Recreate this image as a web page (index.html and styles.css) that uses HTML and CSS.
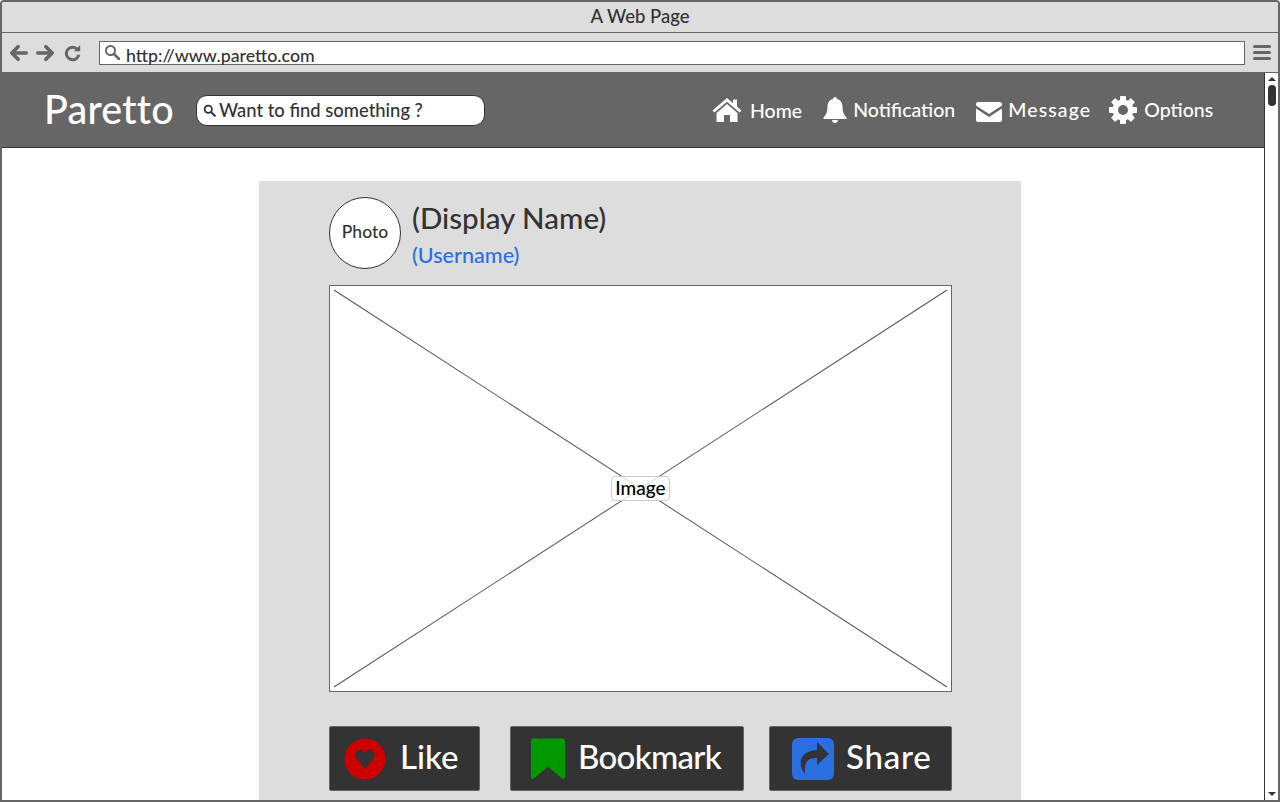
FILE: index.html
```html
<!DOCTYPE html>
<html>
<head>
    <title>A Web Page</title>
    <link rel="stylesheet" href="styles.css">
</head>
<body>
    <div class="window">
        <div class="titlebar">A Web Page</div>
        <div class="toolbar">
            <svg class="tool-icon" viewBox="0 0 20 20"><path d="M9 3 L2 10 L9 17 M3 10 H18" fill="none" stroke="#666" stroke-width="4" stroke-linecap="round" stroke-linejoin="round"/></svg>
            <svg class="tool-icon" viewBox="0 0 20 20"><path d="M11 3 L18 10 L11 17 M17 10 H2" fill="none" stroke="#666" stroke-width="4" stroke-linecap="round" stroke-linejoin="round"/></svg>
            <svg class="tool-icon reload" viewBox="0 0 20 20"><path d="M15 6 A7 7 0 1 0 16.5 12" fill="none" stroke="#666" stroke-width="3.4"/><path d="M11 8 H18 V1 Z" fill="#666"/></svg>
            <div class="address">
                <svg class="addr-icon" viewBox="0 0 16 16"><circle cx="6.5" cy="6.5" r="4.5" fill="none" stroke="#666" stroke-width="2"/><path d="M10 10 L15 15" stroke="#666" stroke-width="2.6" stroke-linecap="round"/></svg>
                <span>http://www.paretto.com</span>
            </div>
            <div class="burger"><i></i><i></i><i></i></div>
        </div>
        <div class="viewport">
            <div class="page">
                <nav class="navbar">
                    <div class="brand">Paretto</div>
                    <div class="search">
                        <svg class="search-icon" viewBox="0 0 16 16"><circle cx="6.5" cy="6.5" r="4.5" fill="none" stroke="#333" stroke-width="2.2"/><path d="M10 10 L14.5 14.5" stroke="#333" stroke-width="2.6" stroke-linecap="round"/></svg>
                        <span>Want to find something ?</span>
                    </div>
                    <div class="nav-links">
                        <a class="nav-link home">
                            <svg class="nav-icon home-icon" viewBox="0 0 30 26"><path d="M15 1 L21 6.2 V2.5 H25 V9.7 L29.5 13.6 L27.6 15.6 L15 4.8 L2.4 15.6 L.5 13.6 Z M15 7 L25.5 16 V25 H18 V18 H12 V25 H4.5 V16 Z" fill="#fff"/></svg>
                            <span>Home</span>
                        </a>
                        <a class="nav-link bell">
                            <svg class="nav-icon bell-icon" viewBox="0 0 24 26"><path d="M12 0 C13.5 0 14 1 14 2 C18 3 19.5 6 19.5 10 C19.5 15 21 18 23.5 20.5 V22 H.5 V20.5 C3 18 4.5 15 4.5 10 C4.5 6 6 3 10 2 C10 1 10.5 0 12 0 Z M9 23 H15 C15 25 13.5 26 12 26 C10.5 26 9 25 9 23 Z" fill="#fff"/></svg>
                            <span class="raised">Notification</span>
                        </a>
                        <a class="nav-link mail">
                            <svg class="nav-icon mail-icon" viewBox="0 0 26 20"><path d="M2 0 H24 C25 0 26 1 26 2 V3.5 L13 12 L0 3.5 V2 C0 1 1 0 2 0 Z M0 6.5 L13 15 L26 6.5 V18 C26 19 25 20 24 20 H2 C1 20 0 19 0 18 Z" fill="#fff"/></svg>
                            <span class="raised wide">Message</span>
                        </a>
                        <a class="nav-link gear">
                            <svg class="nav-icon gear-icon" viewBox="0 0 28 28">
                                <g fill="#fff">
                                    <circle cx="14" cy="14" r="10.5"/>
                                    <rect x="11" y="0" width="6" height="28" rx="1"/>
                                    <rect x="11" y="0" width="6" height="28" rx="1" transform="rotate(45 14 14)"/>
                                    <rect x="11" y="0" width="6" height="28" rx="1" transform="rotate(90 14 14)"/>
                                    <rect x="11" y="0" width="6" height="28" rx="1" transform="rotate(135 14 14)"/>
                                </g>
                                <circle cx="14" cy="14" r="5" fill="#666"/>
                            </svg>
                            <span class="raised">Options</span>
                        </a>
                    </div>
                </nav>
                <div class="content">
                    <div class="card">
                        <div class="profile">
                            <div class="photo">Photo</div>
                            <div class="names">
                                <div class="display-name">(Display Name)</div>
                                <div class="username">(Username)</div>
                            </div>
                        </div>
                        <div class="image-box">
                            <svg class="cross" viewBox="0 0 620 404" preserveAspectRatio="none">
                                <path d="M4 4 L616 400 M616 4 L4 400" stroke="#555" stroke-width="1" fill="none"/>
                            </svg>
                            <span class="image-label">Image</span>
                        </div>
                        <div class="actions">
                            <button class="action like">
                                <svg class="action-icon" viewBox="0 0 42 42"><circle cx="21" cy="21" r="20.5" fill="#c00"/><path d="M21 31 L12 20 C10 15 13 12 16 12 C18 12 20 13 21 15 C22 13 24 12 26 12 C29 12 32 15 30 20 Z" fill="#333"/></svg>
                                <span>Like</span>
                            </button>
                            <button class="action bookmark">
                                <svg class="action-icon bm-icon" viewBox="0 0 34 41"><path d="M2 0 H32 C33 0 34 1 34 2 V38 C34 40.5 32 41 31 40 L17 28 L3 40 C2 41 0 40.5 0 38 V2 C0 1 1 0 2 0 Z" fill="#090"/></svg>
                                <span>Bookmark</span>
                            </button>
                            <button class="action share">
                                <svg class="action-icon" viewBox="0 0 42 42"><rect width="42" height="42" rx="6" fill="#2a6fe0"/><path d="M25 4 L37 16 L25 27 V20 C17 20 12 22 13 36 C6 28 6 13 25 12 Z" fill="#333"/></svg>
                                <span>Share</span>
                            </button>
                        </div>
                    </div>
                </div>
            </div>
            <div class="scrollbar">
                <div class="arrow-up"></div>
                <div class="thumb"></div>
                <div class="spacer"></div>
                <div class="arrow-down"></div>
            </div>
        </div>
    </div>
</body>
</html>
```

FILE: styles.css
```css
html, body {
    margin: 0;
    height: 100%;
    overflow: hidden;
}
body {
    font-family: "Lato", "Open Sans", sans-serif;
    font-weight: 500;
    background-color: #fff;
    color: #333;
}
.window {
    box-sizing: border-box;
    width: 1280px;
    height: 802px;
    display: flex;
    flex-direction: column;
    border: 2px solid #666;
    border-radius: 4px 4px 0 0;
    overflow: hidden;
}
.titlebar {
    height: 30px;
    flex: none;
    background-color: #ddd;
    border-bottom: 1px solid #666;
    text-align: center;
    font-size: 18.5px;
    line-height: 28px;
}
.toolbar {
    height: 39px;
    flex: none;
    display: flex;
    align-items: center;
    background-color: #ddd;
    border-bottom: 1px solid #666;
    padding: 0 7px 0 8px;
}
.tool-icon {
    width: 18px;
    height: 18px;
    margin-right: 8px;
}
.tool-icon.reload {
    margin-left: 2px;
    margin-right: 17px;
}
.address {
    flex: 1;
    height: 22px;
    display: flex;
    align-items: center;
    background: #fff;
    border: 1px solid #666;
    font-size: 17.8px;
}
.address span {
    margin-top: 5px;
}
.addr-icon {
    width: 16px;
    height: 16px;
    margin: 2px 6px 0 4px;
    align-self: flex-start;
}
.burger {
    width: 18px;
    margin-left: 8px;
    display: flex;
    flex-direction: column;
    gap: 3px;
}
.burger i {
    height: 3px;
    border-radius: 2px;
    background-color: #666;
}
.viewport {
    flex: 1;
    display: flex;
    min-height: 0;
}
.page {
    flex: 1;
    min-width: 0;
    display: flex;
    flex-direction: column;
}
.scrollbar {
    width: 13px;
    flex: none;
    display: flex;
    flex-direction: column;
    align-items: center;
    border-left: 1px solid #333;
    background: #fff;
}
.arrow-up {
    margin-top: 4px;
    border: 4px solid transparent;
    border-top: 0;
    border-bottom: 4px solid #333;
}
.arrow-down {
    margin-bottom: 4px;
    border: 4px solid transparent;
    border-bottom: 0;
    border-top: 4px solid #333;
}
.thumb {
    width: 8px;
    height: 21px;
    margin-top: 4px;
    border-radius: 4px;
    background-color: #333;
}
.spacer {
    flex: 1;
}
.navbar {
    height: 74px;
    flex: none;
    display: flex;
    align-items: center;
    padding-left: 42px;
    background-color: #666;
    border-bottom: 1px solid #333;
    color: #fff;
}
.brand {
    font-size: 39.5px;
    letter-spacing: 0.2px;
    width: 152px;
    margin-bottom: 4px;
}
.search {
    box-sizing: border-box;
    width: 289px;
    height: 31px;
    display: flex;
    align-items: center;
    background: #fff;
    border: 1px solid #333;
    border-radius: 11px;
    color: #333;
    font-size: 18.4px;
    padding-left: 6px;
}
.search-icon {
    width: 13px;
    height: 13px;
    margin-right: 3px;
}
.nav-links {
    flex: 1;
    display: flex;
    align-items: center;
    padding-left: 227px;
    font-size: 19.5px;
}
.nav-link {
    display: flex;
    align-items: center;
    color: #fff;
}
.raised {
    margin-bottom: 2px;
}
.wide {
    letter-spacing: 1.1px;
}
.home-icon {
    width: 30px;
    height: 26px;
    margin-right: 8px;
}
.bell-icon {
    width: 24px;
    height: 26px;
    margin-left: 21px;
    margin-right: 6px;
}
.mail-icon {
    width: 26px;
    height: 20px;
    margin-left: 21px;
    margin-right: 6px;
    margin-top: 3px;
}
.gear-icon {
    width: 28px;
    height: 28px;
    margin-left: 18px;
    margin-right: 7px;
}
.content {
    flex: 1;
    min-height: 0;
    padding: 33px 0 0 14px;
    display: flex;
    justify-content: center;
    overflow: hidden;
}
.card {
    box-sizing: border-box;
    width: 762px;
    height: 700px;
    flex: none;
    background-color: #ddd;
    padding: 16px 0 0 70px;
}
.profile {
    display: flex;
    align-items: flex-start;
    height: 72px;
}
.photo {
    box-sizing: border-box;
    width: 72px;
    height: 72px;
    padding-bottom: 3px;
    border: 1px solid #333;
    border-radius: 50%;
    background: #fff;
    display: flex;
    align-items: center;
    justify-content: center;
    font-size: 17.5px;
}
.names {
    margin-left: 11px;
}
.display-name {
    font-size: 29.5px;
    line-height: 41px;
}
.username {
    font-size: 21.6px;
    line-height: 34px;
    color: #2a6fe0;
}
.image-box {
    box-sizing: border-box;
    position: relative;
    width: 623px;
    height: 407px;
    margin-top: 16px;
    background: #fff;
    border: 1px solid #666;
    display: flex;
    align-items: center;
    justify-content: center;
}
.cross {
    position: absolute;
    left: 0;
    top: 0;
    width: 100%;
    height: 100%;
}
.image-label {
    position: relative;
    padding: 1px 3px 3px;
    background: rgba(255, 255, 255, 0.8);
    border: 1px solid #ccc;
    border-radius: 4px;
    font-size: 19px;
    color: #000;
    line-height: 19px;
}
.actions {
    display: flex;
    margin-top: 34px;
}
.action {
    box-sizing: border-box;
    height: 65px;
    display: flex;
    align-items: center;
    background-color: #333;
    border: 1px solid #666;
    border-radius: 2px;
    color: #fff;
    font-family: inherit;
    font-weight: 500;
    font-size: 33px;
    padding: 0 0 0 14px;
}
.action span {
    margin-bottom: 5px;
}
.like {
    width: 151px;
}
.bookmark {
    width: 234px;
    margin-left: 30px;
    padding-left: 20px;
    letter-spacing: -0.7px;
}
.share {
    width: 183px;
    margin-left: 25px;
    padding-left: 22px;
    letter-spacing: 0.8px;
}
.action-icon {
    width: 42px;
    height: 42px;
    margin-right: 14px;
}
.share .action-icon {
    margin-right: 12px;
}
.bm-icon {
    width: 34px;
    height: 42px;
    margin-right: 13px;
}
```
